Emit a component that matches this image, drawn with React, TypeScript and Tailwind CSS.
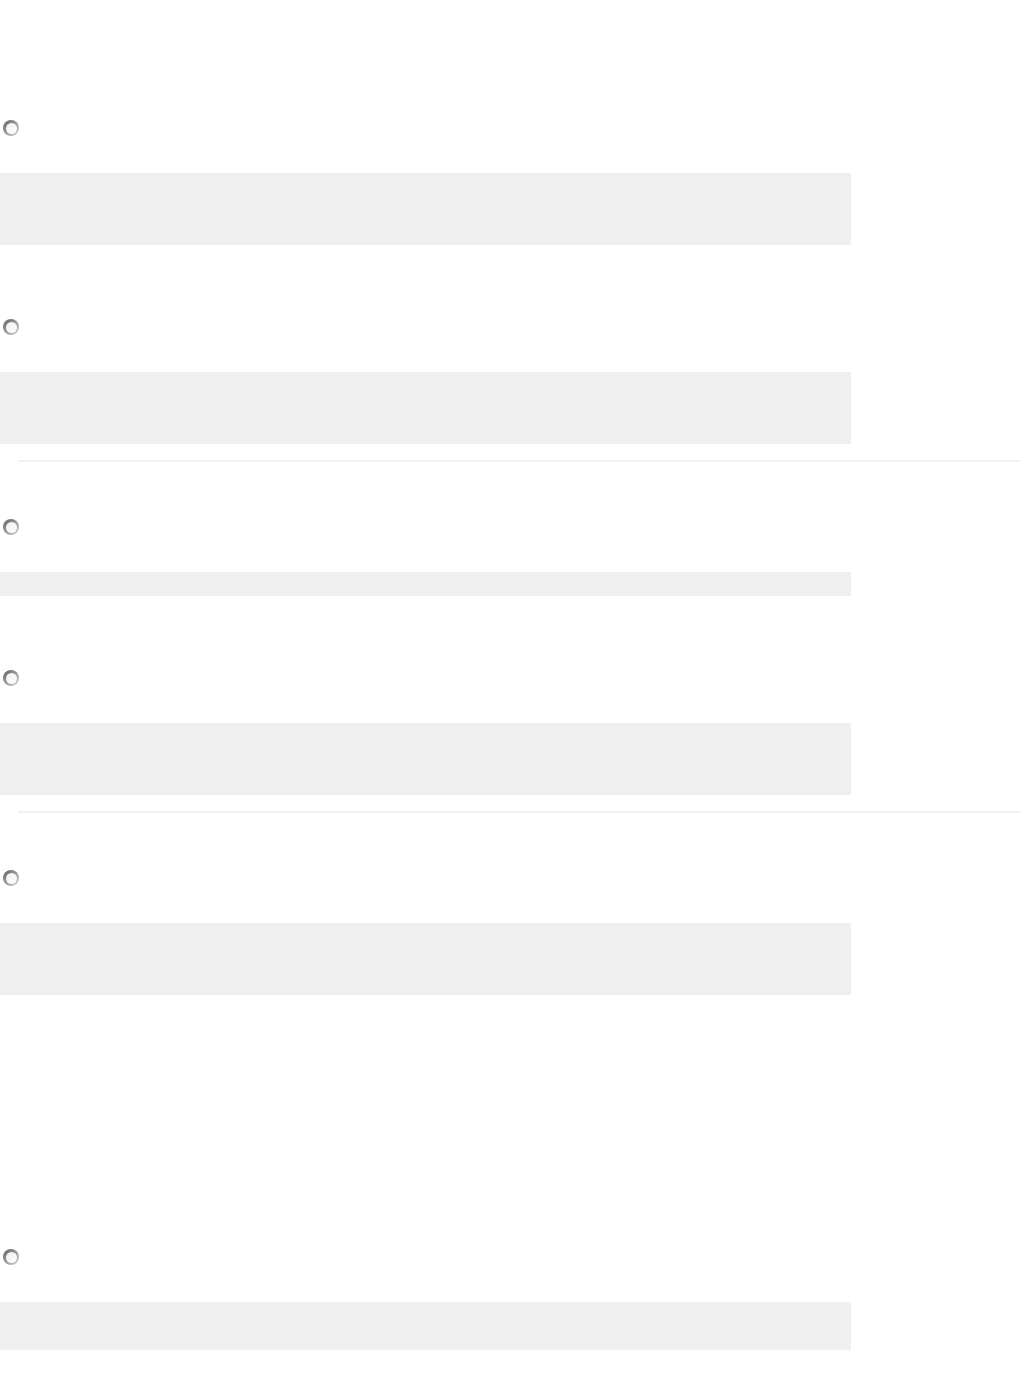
function Radio() {
  return (
    <div className="ml-[3px] flex h-4 w-4 items-center justify-center rounded-full bg-gradient-to-br from-[#5e5e5e] via-[#9a9a9a] to-[#d6d6d6]">
      <div className="h-[11px] w-[11px] rounded-full bg-gradient-to-br from-[#f0f0f0] to-white" />
    </div>
  );
}

function Field({ h, top }: { h: string; top: string }) {
  return (
    <div className={top}>
      <Radio />
      <div className={`mt-[37px] w-[851px] bg-[#f0f0f0] ${h}`} />
    </div>
  );
}

function Divider({ top }: { top: string }) {
  return <div className={`ml-[18px] h-[2px] bg-[#f2f2f2] ${top}`} />;
}

export default function App() {
  return (
    <div className="min-h-[1393px] w-[1021px] bg-white font-['Liberation_Sans',sans-serif]">
      <Field top="pt-[120px]" h="h-[72px]" />
      <Field top="pt-[74px]" h="h-[72px]" />
      <Divider top="mt-[16px]" />
      <Field top="pt-[57px]" h="h-[24px]" />
      <Field top="pt-[74px]" h="h-[72px]" />
      <Divider top="mt-[16px]" />
      <Field top="pt-[57px]" h="h-[72px]" />
      <Field top="pt-[254px]" h="h-[48px]" />
    </div>
  );
}
